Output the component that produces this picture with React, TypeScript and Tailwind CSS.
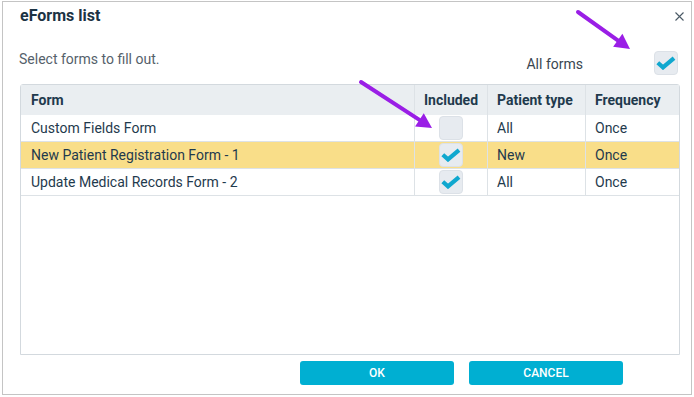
import React from 'react';

type Row = { name: string; included: boolean; patientType: string; frequency: string; selected?: boolean };

const rows: Row[] = [
  { name: 'Custom Fields Form', included: false, patientType: 'All', frequency: 'Once' },
  { name: 'New Patient Registration Form - 1', included: true, patientType: 'New', frequency: 'Once', selected: true },
  { name: 'Update Medical Records Form - 2', included: true, patientType: 'All', frequency: 'Once' },
];

const CheckBox: React.FC<{ checked: boolean }> = ({ checked }) => (
  <div className="w-[24px] h-[24px] rounded-[4px] bg-[#e7ebf0] border border-[#dce1e7] flex items-center justify-center">
    {checked && (
      <svg width="20" height="14" viewBox="0 0 20 14">
        <path d="M1.8 6.8 L7 11.4 L18 2.2" fill="none" stroke="#10a8cf" strokeWidth="4.2" strokeLinecap="butt" strokeLinejoin="miter" />
      </svg>
    )}
  </div>
);

const Arrow: React.FC<{ x1: number; y1: number; x2: number; y2: number }> = ({ x1, y1, x2, y2 }) => {
  const a = Math.atan2(y2 - y1, x2 - x1);
  const len = 15;
  const w = 8;
  const bx = x2 - len * Math.cos(a);
  const by = y2 - len * Math.sin(a);
  const px = -Math.sin(a) * w;
  const py = Math.cos(a) * w;
  return (
    <g>
      <line x1={x1} y1={y1} x2={bx} y2={by} stroke="#9a1ee6" strokeWidth="4" strokeLinecap="round" />
      <polygon points={`${x2},${y2} ${bx + px},${by + py} ${bx - px},${by - py}`} fill="#9a1ee6" />
    </g>
  );
};

export default function App() {
  return (
    <div className="relative w-[694px] h-[397px] bg-white overflow-hidden" style={{ fontFamily: 'Roboto, "Liberation Sans", sans-serif' }}>
      <div className="ml-[2px] mt-[1px] w-[690px] h-[394px] border border-[#c4c4c4] flex flex-col">
        <div className="h-[28px] flex items-center justify-between pl-[17px] pr-[6px]">
          <span className="text-[16px] font-bold text-[#1c3344]">eForms list</span>
          <svg width="9" height="9" viewBox="0 0 9 9" className="mr-[1px]">
            <path d="M0.5 0.5 L8.5 8.5 M8.5 0.5 L0.5 8.5" stroke="#4b5a66" strokeWidth="1.1" />
          </svg>
        </div>
        <div className="h-[54px] flex justify-between pl-[16px] pr-[13px]">
          <div className="pt-[19px] text-[14px] leading-[20px] text-[#55616b]">Select forms to fill out.</div>
          <div className="pt-[21px] flex items-start">
            <span className="text-[14px] leading-[24px] text-[#3a4650] mt-[1px] mr-[71px]">All forms</span>
            <CheckBox checked />
          </div>
        </div>
        <div className="ml-[17px] mr-[11px] h-[271px] border border-[#d3d9de] rounded-tl-[3px] rounded-tr-[3px] text-[14px] text-[#1f3a4d]">
          <div className="flex h-[30px] bg-[#eaeef1] font-bold items-center">
            <div className="w-[393px] pl-[10px] h-full flex items-center">Form</div>
            <div className="w-[73px] h-full flex items-center justify-center border-l border-[#dde2e6]">Included</div>
            <div className="w-[98px] h-full flex items-center pl-[9px] border-l border-[#dde2e6]">Patient type</div>
            <div className="flex-1 h-full flex items-center pl-[9px] border-l border-[#dde2e6]">Frequency</div>
          </div>
          {rows.map((r) => (
            <div key={r.name} className={`flex h-[27px] border-b border-[#dde2e6] items-center ${r.selected ? 'bg-[#f9de89]' : 'bg-white'}`}>
              <div className="w-[393px] pl-[10px] h-full flex items-center">{r.name}</div>
              <div className="w-[73px] h-full flex items-center justify-center border-l border-[#dde2e6]">
                <CheckBox checked={r.included} />
              </div>
              <div className="w-[98px] h-full flex items-center pl-[9px] border-l border-[#dde2e6]">{r.patientType}</div>
              <div className="flex-1 h-full flex items-center pl-[9px] border-l border-[#dde2e6]">{r.frequency}</div>
            </div>
          ))}
        </div>
        <div className="flex justify-end gap-[15px] pr-[68px] pt-[6px]">
          <button className="w-[154px] h-[24px] rounded-[3px] bg-[#00afd2] text-white text-[12px] font-medium">OK</button>
          <button className="w-[154px] h-[24px] rounded-[3px] bg-[#00afd2] text-white text-[12px] font-medium">CANCEL</button>
        </div>
      </div>
      <svg className="absolute left-0 top-0 pointer-events-none" width="694" height="397">
        <Arrow x1={578} y1={12} x2={630} y2={49} />
        <Arrow x1={361} y1={82} x2={432} y2={128} />
      </svg>
    </div>
  );
}
